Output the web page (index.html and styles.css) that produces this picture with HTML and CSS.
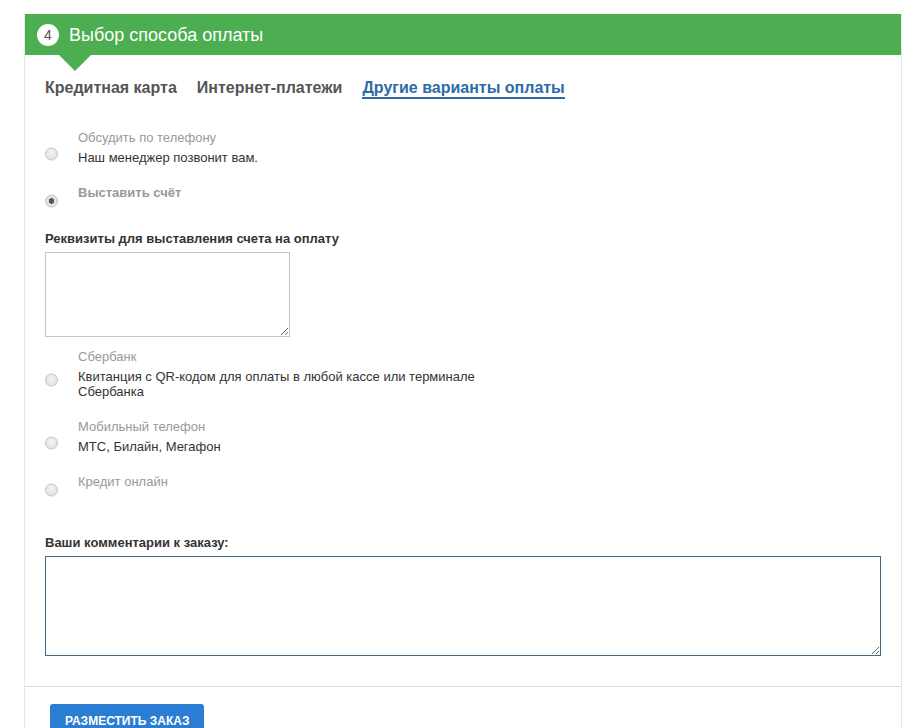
FILE: index.html
```html
<!DOCTYPE html>
<html lang="ru">
<head>
<meta charset="utf-8">
<title>Выбор способа оплаты</title>
<link rel="stylesheet" href="styles.css">
</head>
<body>
<div class="card">
  <div class="head">
    <span class="num">4</span>
    <span class="title">Выбор способа оплаты</span>
  </div>
  <div class="body">
    <div class="tabs">
      <span class="tab">Кредитная карта</span>
      <span class="tab">Интернет-платежи</span>
      <span class="tab active">Другие варианты оплаты</span>
    </div>

    <div class="options">
      <label class="opt">
        <input type="radio" name="pay" class="radio">
        <span class="text">
          <span class="otitle">Обсудить по телефону</span>
          <span class="odesc">Наш менеджер позвонит вам.</span>
        </span>
      </label>
      <label class="opt">
        <input type="radio" name="pay" class="radio radio-low" checked>
        <span class="text">
          <span class="otitle bold">Выставить счёт</span>
        </span>
      </label>
    </div>

    <div class="field">
      <div class="flabel">Реквизиты для выставления счета на оплату</div>
      <textarea class="ta-small"></textarea>
    </div>

    <div class="options options-2">
      <label class="opt">
        <input type="radio" name="pay" class="radio">
        <span class="text">
          <span class="otitle">Сбербанк</span>
          <span class="odesc">Квитанция с QR-кодом для оплаты в любой кассе или терминале<br>Сбербанка</span>
        </span>
      </label>
      <label class="opt">
        <input type="radio" name="pay" class="radio">
        <span class="text">
          <span class="otitle">Мобильный телефон</span>
          <span class="odesc">МТС, Билайн, Мегафон</span>
        </span>
      </label>
      <label class="opt">
        <input type="radio" name="pay" class="radio radio-low">
        <span class="text">
          <span class="otitle">Кредит онлайн</span>
        </span>
      </label>
    </div>

    <div class="field field-comment">
      <div class="flabel">Ваши комментарии к заказу:</div>
      <textarea class="ta-big"></textarea>
    </div>
  </div>
  <div class="foot">
    <button class="btn" type="button">РАЗМЕСТИТЬ ЗАКАЗ</button>
  </div>
</div>
</body>
</html>
```

FILE: styles.css
```css
html, body {
  margin: 0;
  padding: 0;
  background: #ffffff;
  font-family: "Liberation Sans", Arial, sans-serif;
  color: #333333;
}

body {
  padding-top: 14px;
  padding-left: 24px;
}

.card {
  width: 876px;
  border-left: 1px solid #e8e8e8;
  border-right: 1px solid #e8e8e8;
}

.head {
  position: relative;
  height: 41px;
  background: #4dae51;
  display: flex;
  align-items: center;
  padding-left: 12px;
  gap: 10px;
}

.head::after {
  content: "";
  position: absolute;
  left: 34px;
  top: 41px;
  width: 0;
  height: 0;
  border-left: 16px solid transparent;
  border-right: 16px solid transparent;
  border-top: 16px solid #4dae51;
}

.num {
  width: 22px;
  height: 22px;
  border-radius: 50%;
  background: #ffffff;
  color: #555555;
  font-size: 14px;
  line-height: 22px;
  text-align: center;
  margin-top: 1px;
}

.title {
  color: #ffffff;
  font-size: 18px;
  line-height: 20px;
}

.body {
  padding: 24px 20px 30px 20px;
}

.tabs {
  display: flex;
  gap: 20px;
  font-size: 16px;
  font-weight: bold;
  line-height: 18px;
}

.tab {
  color: #555555;
  border-bottom: 2px solid transparent;
}

.tab.active {
  color: #2e6aa6;
  border-bottom-color: #2e6aa6;
}

.options {
  margin-top: 30.5px;
  display: flex;
  flex-direction: column;
  gap: 20px;
}

.options-2 {
  margin-top: 11.5px;
}

.opt {
  display: flex;
  align-items: center;
  gap: 20px;
  font-size: 13px;
  line-height: 15px;
}

.radio {
  appearance: none;
  -webkit-appearance: none;
  margin: 0;
  width: 13px;
  height: 13px;
  border-radius: 50%;
  border: 1px solid #c4c4c4;
  background: radial-gradient(circle at 50% 40%, #f4f4f4 0%, #dcdcdc 100%);
  transform: translateY(6.5px);
  flex: none;
  box-sizing: border-box;
}

.radio-low {
  transform: translateY(8.5px);
}

.radio:checked {
  background: radial-gradient(circle, #555555 0, #555555 2.5px, #e6e6e6 3px, #dadada 100%);
}

.text {
  display: flex;
  flex-direction: column;
  gap: 5px;
}

.otitle {
  color: #999999;
}

.otitle.bold {
  font-weight: bold;
}

.odesc {
  color: #333333;
}

.field {
  margin-top: 31px;
  display: flex;
  flex-direction: column;
  align-items: flex-start;
  gap: 6.5px;
}

.field-comment {
  margin-top: 46px;
}

.flabel {
  font-size: 13px;
  line-height: 15px;
  font-weight: bold;
  color: #333333;
}

textarea {
  box-sizing: border-box;
  margin: 0;
  font-family: "Liberation Sans", Arial, sans-serif;
  background: #ffffff;
}

.ta-small {
  width: 245px;
  height: 85px;
  border: 1px solid #c6c6c6;
}

.ta-big {
  width: 836px;
  height: 100px;
  border: 1px solid #46677d;
}

.foot {
  border-top: 1px solid #dddddd;
  padding: 17px 0 0 25px;
}

.btn {
  background: #2b7dd4;
  color: #ffffff;
  border: none;
  border-radius: 3px;
  font-family: "Liberation Sans", Arial, sans-serif;
  font-size: 12px;
  font-weight: bold;
  height: 34px;
  padding: 0 15px;
  line-height: 34px;
}
```
